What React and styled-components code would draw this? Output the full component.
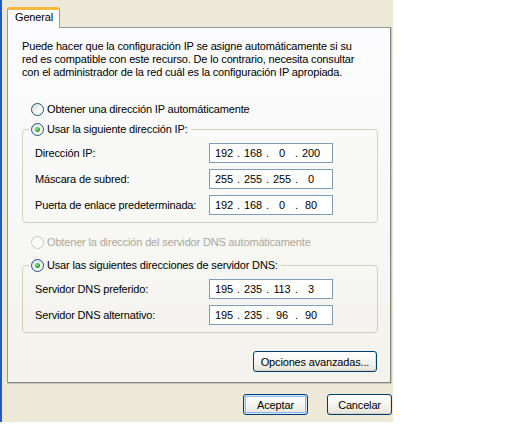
import React from 'react';
import styled, { createGlobalStyle } from 'styled-components';

const GlobalStyle = createGlobalStyle`
  html, body {
    margin: 0;
    padding: 0;
    background: #ffffff;
  }
  body {
    font-family: "Liberation Sans", Arial, sans-serif;
    font-size: 11px;
    letter-spacing: -0.16px;
    color: #000;
  }
`;

const Window = styled.div`
  width: 393px;
  height: 422px;
  box-sizing: border-box;
  background: #ece9d8;
  border-left: 2px solid #2557c9;
  padding: 7px 1px 0 5px;
  display: flex;
  flex-direction: column;
`;

const TabStrip = styled.div`
  display: flex;
  height: 20px;
`;

const Tab = styled.div`
  position: relative;
  z-index: 1;
  width: 53px;
  height: 21px;
  box-sizing: border-box;
  padding: 1px 0 0 7px;
  line-height: 13px;
  background: #fcfcfe;
  border: 1px solid #919b9c;
  border-top: 3px solid #f7b940;
  border-bottom: none;
  border-radius: 3px 3px 0 0;
`;

const Panel = styled.div`
  height: 356px;
  margin-right: 1px;
  box-sizing: border-box;
  border: 1px solid #919b9c;
  border-right-color: #7f8788;
  border-bottom-color: #7f8788;
  box-shadow: 1px 1px 0 #c9c6b9;
  background: linear-gradient(180deg, #fcfcfe 0%, #f8f8f6 50%, #f3f2ec 100%);
  padding: 12px 12px 0 14px;
  display: flex;
  flex-direction: column;
`;

const Intro = styled.p`
  margin: 0;
  line-height: 13px;
  white-space: nowrap;
`;

const RadioRow = styled.label`
  display: flex;
  align-items: center;
  gap: 3px;
  height: 13px;
  line-height: 13px;
  white-space: nowrap;
  margin-top: ${p => p.$top || 0}px;
  margin-left: ${p => p.$indent || 0}px;
  color: ${p => (p.$disabled ? '#aca899' : '#000')};
`;

const RadioDot = styled.span`
  position: relative;
  flex: none;
  width: 13px;
  height: 13px;
  box-sizing: border-box;
  border-radius: 50%;
  border: 1px solid ${p => (p.$disabled ? '#cac8bb' : '#1c5180')};
  background: ${p =>
    p.$disabled ? '#fbfbf9' : 'linear-gradient(135deg, #dcdcd7 0%, #f6f6f3 55%, #ffffff 100%)'};

  &::after {
    content: '';
    display: ${p => (p.$checked ? 'block' : 'none')};
    position: absolute;
    left: 3px;
    top: 3px;
    width: 5px;
    height: 5px;
    border-radius: 50%;
    background: radial-gradient(circle at 35% 35%, #8ee68a 0%, #2fb22c 55%, #178a14 100%);
  }
`;

const Group = styled.fieldset`
  margin: ${p => p.$top}px 0 0 0;
  min-inline-size: 0;
  border: 1px solid #d0d0bf;
  border-radius: 4px;
  padding: 7px 0 7px 6px;
  display: flex;
  flex-direction: column;
  gap: 6px;
`;

const Legend = styled.legend`
  padding: 0 3px 0 2px;
  line-height: 13px;
`;

const FieldRow = styled.div`
  display: grid;
  grid-template-columns: 180px 124px;
  align-items: center;
  height: 20px;
`;

const FieldLabel = styled.span`
  padding-left: 6px;
  white-space: nowrap;
`;

const IpBox = styled.div`
  width: 124px;
  height: 20px;
  box-sizing: border-box;
  border: 1px solid #7f9db9;
  background: #fff;
  display: flex;
  align-items: center;
  padding-left: 2px;
  line-height: 13px;
`;

const Octet = styled.span`
  width: 24px;
  text-align: center;
`;

const Dot = styled.span`
  width: 5px;
  text-align: center;
`;

const Button = styled.button`
  font: inherit;
  letter-spacing: inherit;
  color: #000;
  width: ${p => p.$w}px;
  height: 21px;
  padding: 0;
  border: 1px solid #003c74;
  border-radius: 3px;
  background: linear-gradient(180deg, #ffffff 0%, #f5f4ef 55%, #e6e3d8 100%);
  box-shadow: ${p =>
    p.$default
      ? 'inset 0 0 0 1px #cee7ff, inset 0 0 0 2px #92b4ef'
      : 'inset 0 -1px 0 #d6d0c5, inset -1px 0 0 #e2ded2'};
`;

const AdvancedButton = styled(Button)`
  align-self: flex-end;
  margin: 18px 1px 0 0;
`;

const Footer = styled.div`
  display: flex;
  justify-content: flex-end;
  gap: 19px;
  margin-top: 11px;
`;

const IpField = ({ value }) => {
  const parts = value.split('.');
  return (
    <IpBox>
      {parts.map((p, i) => (
        <React.Fragment key={i}>
          {i > 0 && <Dot>.</Dot>}
          <Octet>{p}</Octet>
        </React.Fragment>
      ))}
    </IpBox>
  );
};

const Radio = ({ checked, disabled, children, ...rest }) => (
  <RadioRow $disabled={disabled} {...rest}>
    <RadioDot $checked={checked} $disabled={disabled} />
    {children}
  </RadioRow>
);

const ipRows = [
  ['Dirección IP:', '192.168.0.200'],
  ['Máscara de subred:', '255.255.255.0'],
  ['Puerta de enlace predeterminada:', '192.168.0.80'],
];

const dnsRows = [
  ['Servidor DNS preferido:', '195.235.113.3'],
  ['Servidor DNS alternativo:', '195.235.96.90'],
];

export default function App() {
  return (
    <>
      <GlobalStyle />
      <Window>
        <TabStrip>
          <Tab>General</Tab>
        </TabStrip>
        <Panel>
          <Intro>
            Puede hacer que la configuración IP se asigne automáticamente si su
            <br />
            red es compatible con este recurso. De lo contrario, necesita consultar
            <br />
            con el administrador de la red cuál es la configuración IP apropiada.
          </Intro>

          <Radio $top={24} $indent={9}>Obtener una dirección IP automáticamente</Radio>

          <Group $top={7}>
            <Legend>
              <Radio checked>Usar la siguiente dirección IP:</Radio>
            </Legend>
            {ipRows.map(([label, ip]) => (
              <FieldRow key={label}>
                <FieldLabel>{label}</FieldLabel>
                <IpField value={ip} />
              </FieldRow>
            ))}
          </Group>

          <Radio disabled $top={13} $indent={9}>
            Obtener la dirección del servidor DNS automáticamente
          </Radio>

          <Group $top={10}>
            <Legend>
              <Radio checked>Usar las siguientes direcciones de servidor DNS:</Radio>
            </Legend>
            {dnsRows.map(([label, ip]) => (
              <FieldRow key={label}>
                <FieldLabel>{label}</FieldLabel>
                <IpField value={ip} />
              </FieldRow>
            ))}
          </Group>

          <AdvancedButton $w={124}>Opciones avanzadas...</AdvancedButton>
        </Panel>
        <Footer>
          <Button $w={65} $default>Aceptar</Button>
          <Button $w={65}>Cancelar</Button>
        </Footer>
      </Window>
    </>
  );
}
